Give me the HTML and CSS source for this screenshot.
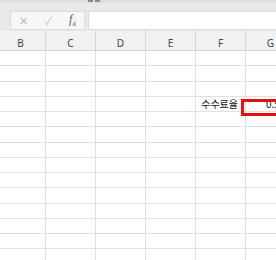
FILE: index.html
```html
<!DOCTYPE html>
<html lang="ko">
<head>
  <meta charset="UTF-8" />
  <meta name="viewport" content="width=device-width, initial-scale=1.0"/>
  <title>시트</title>
  <link rel="stylesheet" href="styles.css">
</head>
<body>
  <!-- 리본 아래쪽 끝 -->
  <div class="ribbon">
    <span class="ribbon-bit"></span>
    <span class="ribbon-bit"></span>
  </div>

  <!-- 수식 입력줄 -->
  <div class="formula-bar">
    <div class="formula-tools">
      <span class="tool tool-off">&#x2715;</span>
      <span class="tool tool-off">&#x2713;</span>
      <span class="tool tool-fx"><i>f</i><sub>x</sub></span>
    </div>
    <div class="formula-input"></div>
  </div>

  <div class="sheet">
    <div class="col-head">
      <div>B</div><div>C</div><div>D</div><div>E</div><div>F</div><div>G</div>
    </div>

    <div class="rows">
      <div class="row"><div></div><div></div><div></div><div></div><div></div><div></div></div>
      <div class="row"><div></div><div></div><div></div><div></div><div></div><div></div></div>
      <div class="row"><div></div><div></div><div></div><div></div><div></div><div></div></div>
      <div class="row">
        <div></div><div></div><div></div><div></div>
        <div class="label">수수료율</div>
        <div class="value">0.5%</div>
      </div>
      <div class="row"><div></div><div></div><div></div><div></div><div></div><div></div></div>
      <div class="row"><div></div><div></div><div></div><div></div><div></div><div></div></div>
      <div class="row"><div></div><div></div><div></div><div></div><div></div><div></div></div>
      <div class="row"><div></div><div></div><div></div><div></div><div></div><div></div></div>
      <div class="row"><div></div><div></div><div></div><div></div><div></div><div></div></div>
      <div class="row"><div></div><div></div><div></div><div></div><div></div><div></div></div>
      <div class="row"><div></div><div></div><div></div><div></div><div></div><div></div></div>
      <div class="row"><div></div><div></div><div></div><div></div><div></div><div></div></div>
      <div class="row"><div></div><div></div><div></div><div></div><div></div><div></div></div>
      <div class="row"><div></div><div></div><div></div><div></div><div></div><div></div></div>
    </div>

    <!-- 강조 표시 -->
    <div class="highlight"></div>
  </div>
</body>
</html>
```

FILE: styles.css
```css
body {
  margin: 0;
  width: 276px;
  height: 260px;
  overflow: hidden;
  background-color: #ffffff;
  font-family: 'Noto Sans', 'Noto Sans CJK KR', sans-serif;
}

.ribbon {
  height: 3px;
  background-color: #dedede;
  display: flex;
  gap: 2px;
  padding-left: 88px;
}

.ribbon-bit {
  width: 5px;
  height: 2px;
  background-color: #8a8a8a;
}

.formula-bar {
  display: flex;
  gap: 3px;
  height: 28px;
  box-sizing: border-box;
  padding: 8px 0 1px 10px;
  background-color: #e9e9e9;
}

.formula-tools {
  width: 75px;
  box-sizing: border-box;
  display: flex;
  align-items: center;
  justify-content: space-between;
  padding: 0 8px 0 8px;
  background-color: #f7f7f7;
  border: 1px solid #dcdcdc;
}

.tool {
  font-size: 11px;
  line-height: 1;
}

.tool-off {
  color: #bdbdbd;
}

.tool-fx {
  font-family: 'Liberation Serif', serif;
  color: #555555;
  font-size: 12px;
}

.tool-fx sub {
  font-size: 8px;
  font-style: italic;
}

.formula-input {
  flex: 1;
  background-color: #ffffff;
  border: 1px solid #dcdcdc;
  border-right: none;
}

.sheet {
  position: relative;
  margin-left: -4px;
}

.col-head {
  display: grid;
  grid-template-columns: repeat(6, 50px);
  height: 20px;
  box-sizing: border-box;
  background-color: #f1f1f1;
  border-bottom: 1px solid #d2d2d2;
}

.col-head div {
  border-right: 1px solid #d6d6d6;
  font-size: 10px;
  color: #444444;
  text-align: center;
  padding-top: 7px;
  line-height: 10px;
}

.row {
  display: grid;
  grid-template-columns: repeat(6, 50px);
  height: 15.25px;
  box-sizing: border-box;
}

.row div {
  border-right: 1px solid #e0e0e0;
  border-bottom: 1px solid #e0e0e0;
  font-family: 'Noto Sans CJK KR', sans-serif;
  font-size: 10px;
  line-height: 14px;
  color: #111111;
}

.row .label {
  text-align: right;
  padding-right: 7px;
}

.row .value {
  padding-left: 20px;
}

.highlight {
  position: absolute;
  left: 245px;
  top: 68px;
  width: 60px;
  height: 17px;
  box-sizing: border-box;
  border: 3px solid #e60f14;
}
```
